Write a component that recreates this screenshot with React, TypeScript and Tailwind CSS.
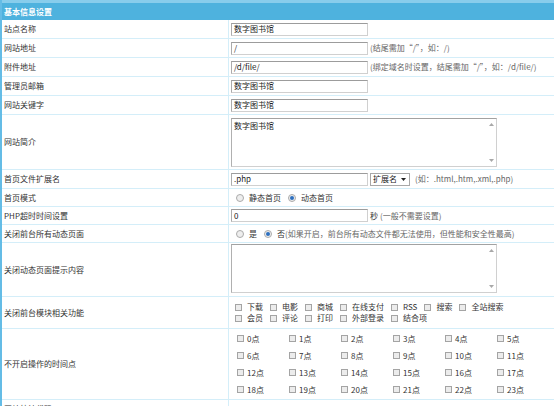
import React from "react";

const Cb = () => (
  <span className="inline-block w-[7px] h-[7px] shrink-0 border border-[#a4a4a4] bg-[#ececec]" />
);

const Radio = ({ checked }: { checked?: boolean }) => (
  <span className="inline-flex w-[8px] h-[8px] shrink-0 rounded-full border border-[#ababab] bg-[#eeeeee] items-center justify-center">
    {checked ? <span className="w-[4px] h-[4px] rounded-full bg-[#2d6fbf]" /> : null}
  </span>
);

const CbItem = ({ label }: { label: string }) => (
  <span className="flex items-center mr-[7px]">
    <Cb />
    <span className="ml-[5px]">{label}</span>
  </span>
);

const Input = ({ value }: { value: string }) => (
  <div className="w-[137px] h-[13px] shrink-0 border border-[#d0d0d0] border-t-[#9c9c9c] border-l-[#acacac] pl-[2px] flex items-center text-[#222]">
    {value}
  </div>
);

const Hint = ({ children }: { children: React.ReactNode }) => (
  <span className="text-[#666]">{children}</span>
);

const TextArea = ({ value }: { value?: string }) => (
  <div className="w-[266px] h-[49px] border border-[#d0d0d0] border-t-[#a2a2a2] border-l-[#b0b0b0] flex">
    <div className="flex-1 pl-[2px] pt-[3px] text-[#222]">{value}</div>
    <div className="w-[9px] flex flex-col justify-between items-center py-[4px]">
      <svg width="5" height="3" viewBox="0 0 5 3">
        <path d="M0 3 L2.5 0 L5 3 Z" fill="#a8a8a8" />
      </svg>
      <svg width="5" height="3" viewBox="0 0 5 3">
        <path d="M0 0 L5 0 L2.5 3 Z" fill="#a8a8a8" />
      </svg>
    </div>
  </div>
);

const Row = ({
  label,
  cls,
  valueCls,
  children,
}: {
  label: string;
  cls: string;
  valueCls?: string;
  children?: React.ReactNode;
}) => (
  <div className={"flex border-b border-[#d4eef9] " + cls}>
    <div className="w-[227px] shrink-0 border-r border-[#d4eef9] pl-[2px] flex items-center">
      {label}
    </div>
    <div className={"flex-1 pl-[2px] flex " + (valueCls ?? "items-center")}>{children}</div>
  </div>
);

const hours = Array.from({ length: 24 }, (_, i) => i);

export default function App() {
  return (
    <div className="w-[554px] h-[406px] overflow-hidden bg-white text-[8px] leading-none text-[#333] font-['Noto_Sans_CJK_SC',sans-serif]">
      <div className="border-l-2 border-[#64bce6]">
        <div className="h-[20px] border-t-[3px] border-[#88cdec] bg-[#4eb2de] pl-[2px] flex items-center font-bold text-white">
          基本信息设置
        </div>
        <Row label="站点名称" cls="h-[19px]">
          <Input value="数字图书馆" />
        </Row>
        <Row label="网站地址" cls="h-[19px]">
          <Input value="/" />
          <span className="ml-[2px]">
            <Hint>(结尾需加“/”，如：/)</Hint>
          </span>
        </Row>
        <Row label="附件地址" cls="h-[19px]">
          <Input value="/d/file/" />
          <span className="ml-[2px]">
            <Hint>(绑定域名时设置，结尾需加“/”，如：/d/file/)</Hint>
          </span>
        </Row>
        <Row label="管理员邮箱" cls="h-[19px]">
          <Input value="数字图书馆" />
        </Row>
        <Row label="网站关键字" cls="h-[19px]">
          <Input value="数字图书馆" />
        </Row>
        <Row label="网站简介" cls="h-[55px]" valueCls="items-start pt-[3px]">
          <TextArea value="数字图书馆" />
        </Row>
        <Row label="首页文件扩展名" cls="h-[19px]">
          <Input value=".php" />
          <div className="ml-[2px] w-[40px] h-[13px] border border-[#a8a8a8] bg-white flex items-center justify-between pl-[2px] pr-[3px] text-[#222]">
            <span>扩展名</span>
            <svg width="5" height="3" viewBox="0 0 5 3">
              <path d="M0 0 L5 0 L2.5 3 Z" fill="#222" />
            </svg>
          </div>
          <span className="ml-[5px]">
            <Hint>(如：.html,.htm,.xml,.php)</Hint>
          </span>
        </Row>
        <Row label="首页模式" cls="h-[18px]">
          <div className="ml-[5px] flex items-center">
            <Radio />
            <span className="ml-[5px] mr-[7px]">静态首页</span>
            <Radio checked />
            <span className="ml-[5px]">动态首页</span>
          </div>
        </Row>
        <Row label="PHP超时时间设置" cls="h-[18px]">
          <Input value="0" />
          <span className="ml-[2px]">秒</span>
          <span className="ml-[2px]">
            <Hint>(一般不需要设置)</Hint>
          </span>
        </Row>
        <Row label="关闭前台所有动态页面" cls="h-[18px]">
          <div className="ml-[5px] flex items-center">
            <Radio />
            <span className="ml-[5px] mr-[7px]">是</span>
            <Radio checked />
            <span className="ml-[5px]">否</span>
            <Hint>(如果开启，前台所有动态文件都无法使用，但性能和安全性最高)</Hint>
          </div>
        </Row>
        <Row label="关闭动态页面提示内容" cls="h-[54px]" valueCls="items-start pt-[1px]">
          <TextArea />
        </Row>
        <Row label="关闭前台模块相关功能" cls="h-[32px]">
          <div className="ml-[4px] flex flex-col">
            <div className="h-[11px] flex items-center">
              <CbItem label="下载" />
              <CbItem label="电影" />
              <CbItem label="商城" />
              <CbItem label="在线支付" />
              <CbItem label="RSS" />
              <CbItem label="搜索" />
              <CbItem label="全站搜索" />
            </div>
            <div className="h-[11px] flex items-center">
              <CbItem label="会员" />
              <CbItem label="评论" />
              <CbItem label="打印" />
              <CbItem label="外部登录" />
              <CbItem label="结合项" />
            </div>
          </div>
        </Row>
        <Row label="不开启操作的时间点" cls="h-[71px]">
          <div className="ml-[4px] grid grid-cols-[repeat(6,52px)]">
            {hours.map((h) => (
              <div key={h} className="h-[17px] flex items-center pl-[2px]">
                <Cb />
                <span className="ml-[3px]">{h}点</span>
              </div>
            ))}
          </div>
        </Row>
        <Row label="网站统计代码" cls="h-[19px]" />
      </div>
    </div>
  );
}
